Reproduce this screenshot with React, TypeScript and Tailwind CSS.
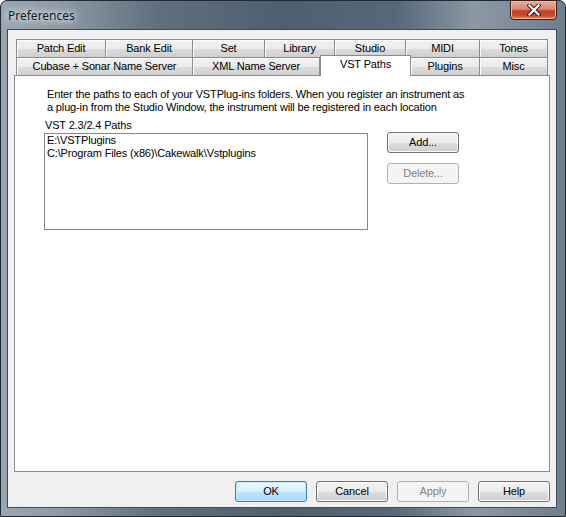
import React from "react";

type Tab = { label: string; w: string; active?: boolean };

const backRow: Tab[] = [
  { label: "Patch Edit", w: "w-[90px]" },
  { label: "Bank Edit", w: "w-[87px]" },
  { label: "Set", w: "w-[72px]" },
  { label: "Library", w: "w-[70px]" },
  { label: "Studio", w: "w-[71px]" },
  { label: "MIDI", w: "w-[74px]" },
  { label: "Tones", w: "w-[68px]" },
];

const frontRow: Tab[] = [
  { label: "Cubase + Sonar Name Server", w: "w-[177px]" },
  { label: "XML Name Server", w: "w-[127px]" },
  { label: "VST Paths", w: "w-[91px]", active: true },
  { label: "Plugins", w: "w-[69px]" },
  { label: "Misc", w: "w-[68px]" },
];

const vstPaths = ["E:\\VSTPlugins", "C:\\Program Files (x86)\\Cakewalk\\Vstplugins"];

function TabButton({ tab }: { tab: Tab }) {
  if (tab.active) {
    return (
      <div
        className={`${tab.w} relative z-10 -mb-px flex h-[21px] shrink-0 items-start justify-center self-end border border-b-0 border-[#898c95] bg-white pt-[2px]`}
      >
        {tab.label}
      </div>
    );
  }
  return (
    <div
      className={`${tab.w} flex h-[18px] shrink-0 items-center justify-center border-t border-r border-[#898c95] bg-[linear-gradient(#f2f2f2_0%,#ebebeb_50%,#dddddd_51%,#cfcfcf_100%)] shadow-[inset_1px_1px_0_#fcfcfc] first:border-l`}
    >
      {tab.label}
    </div>
  );
}

function PushButton({
  children,
  kind = "normal",
}: {
  children: React.ReactNode;
  kind?: "normal" | "default" | "disabled";
}) {
  const look =
    kind === "default"
      ? "border-[#3c7fb1] bg-[linear-gradient(#eaf6fd_0%,#d9f0fc_50%,#bee6fd_51%,#a7d9f5_100%)] shadow-[inset_0_0_0_1px_#c9e7f7]"
      : kind === "disabled"
        ? "border-[#adb2b5] bg-[#f4f4f4] text-[#838383]"
        : "border-[#707070] bg-[linear-gradient(#f2f2f2_0%,#ebebeb_50%,#dddddd_51%,#cfcfcf_100%)] shadow-[inset_0_0_0_1px_#fcfcfc]";
  return (
    <div
      className={`flex h-[21px] w-[72px] items-center justify-center rounded-[3px] border ${look}`}
    >
      {children}
    </div>
  );
}

function CloseGlyph() {
  return (
    <svg width="14" height="12" viewBox="0 0 14 12">
      <path d="M2.5 1.5 L11.5 10.5 M11.5 1.5 L2.5 10.5" stroke="#3a1a14" strokeWidth="4.2" strokeLinecap="square" />
      <path d="M2.5 1.5 L11.5 10.5 M11.5 1.5 L2.5 10.5" stroke="#ffffff" strokeWidth="2.2" strokeLinecap="square" />
    </svg>
  );
}

export default function App() {
  return (
    <div className="h-[517px] w-[566px] overflow-hidden bg-white font-['Liberation_Sans',Arial,sans-serif] text-[11px] leading-[13px] tracking-[-0.15px] text-black">
      <div className="flex h-full w-full flex-col rounded-t-[7px] border border-[#1f2a35] bg-[linear-gradient(90deg,#9aa6b1_0%,#8f9ba7_10%,#5f6f7e_28%,#4e5f6f_50%,#56687a_70%,#8c98a4_84%,#6f7e8d_100%)] pb-[8px] pl-[6px] pr-[8px]">
        {/* title bar */}
        <div className="relative flex h-[28px] shrink-0 items-center">
          <span className="ml-[1px] mt-[1px] font-['Noto_Sans',sans-serif] text-[12px] tracking-normal text-[#0f1a24] [text-shadow:0_0_6px_#ffffff,0_0_10px_#ffffff]">
            Preferences
          </span>
          <div className="absolute right-[0px] top-[-1px] flex h-[20px] w-[47px] items-center justify-center rounded-b-[4px] border border-[#3b1e18] bg-[linear-gradient(#e7ab9c_0%,#d98a76_45%,#c5412b_55%,#c9492c_80%,#e08a5c_100%)] shadow-[inset_0_0_0_1px_#f0b8a8]">
            <CloseGlyph />
          </div>
        </div>

        {/* client area */}
        <div className="flex flex-1 flex-col border border-[#3d4a57] bg-[#f0f0f0] px-[6px] pt-[9px]">
          <div className="ml-[2px] flex flex-col">
            <div className="flex h-[18px]">
              {backRow.map((t) => (
                <TabButton key={t.label} tab={t} />
              ))}
            </div>
            <div className="flex h-[18px]">
              {frontRow.map((t) => (
                <TabButton key={t.label} tab={t} />
              ))}
            </div>
          </div>

          <div className="h-[397px] border border-[#898c95] bg-white pl-[29px] pt-[12px]">
            <p className="pl-[3px]">
              Enter the paths to each of your VSTPlug-ins folders. When you register an instrument as
              <br />
              a plug-in from the Studio Window, the instrument will be registered in each location
            </p>
            <div className="mt-[5px] pl-[1px]">VST 2.3/2.4 Paths</div>
            <div className="mt-px flex items-start gap-[19px]">
              <div className="h-[97px] w-[324px] border border-[#828790] bg-white px-[2px]">
                {vstPaths.map((p) => (
                  <div key={p}>{p}</div>
                ))}
              </div>
              <div className="-mt-px flex flex-col gap-[10px]">
                <PushButton>Add...</PushButton>
                <PushButton kind="disabled">Delete...</PushButton>
              </div>
            </div>
          </div>

          <div className="mt-[9px] flex justify-end gap-[9px]">
            <PushButton kind="default">OK</PushButton>
            <PushButton>Cancel</PushButton>
            <PushButton kind="disabled">Apply</PushButton>
            <PushButton>Help</PushButton>
          </div>
        </div>
      </div>
    </div>
  );
}
